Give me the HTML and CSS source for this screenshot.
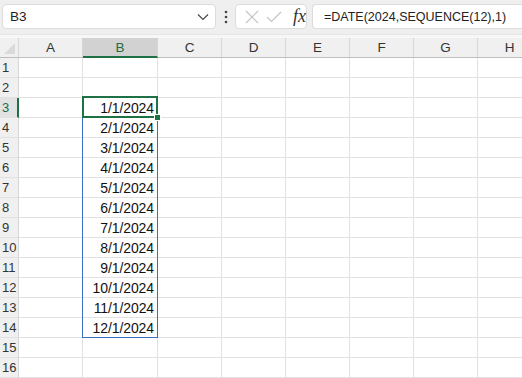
FILE: index.html
```html
<!DOCTYPE html>
<html lang="en">
<head>
    <meta charset="UTF-8">
    <title>Excel - SEQUENCE dates</title>
    <link rel="stylesheet" href="styles.css">
</head>
<body>
    <div class="toolbar">
        <div class="namebox">
            <span>B3</span>
            <svg class="chevron" width="12" height="8" viewBox="0 0 12 8"><path d="M1 1.5 L6 6.5 L11 1.5" fill="none" stroke="#444" stroke-width="1.1"/></svg>
        </div>
        <svg class="dots" width="4" height="14" viewBox="0 0 4 14"><circle cx="2" cy="2" r="1.3" fill="#444"/><circle cx="2" cy="7" r="1.3" fill="#444"/><circle cx="2" cy="12" r="1.3" fill="#444"/></svg>
        <div class="fbuttons">
            <svg width="14" height="14" viewBox="0 0 14 14"><path d="M1 1 L13 13 M13 1 L1 13" stroke="#c4c4c4" stroke-width="1.2"/></svg>
            <svg width="16" height="12" viewBox="0 0 16 12"><path d="M1 6 L5.5 10.5 L15 1" fill="none" stroke="#c4c4c4" stroke-width="1.2"/></svg>
            <span class="fx">fx</span>
        </div>
        <div class="formula">=DATE(2024,SEQUENCE(12),1)</div>
    </div>
    <div class="band"></div>

    <div class="sheet" id="sheet">
        <div class="corner"><span class="tri"></span></div>
    </div>

    <script>
        const sheet = document.getElementById('sheet');
        const cols = ['A', 'B', 'C', 'D', 'E', 'F', 'G', 'H'];

        cols.forEach(c => {
            const h = document.createElement('div');
            h.className = 'colhead' + (c === 'B' ? ' active' : '');
            h.textContent = c;
            sheet.appendChild(h);
        });

        for (let r = 1; r <= 16; r++) {
            const rh = document.createElement('div');
            rh.className = 'rowhead' + (r === 3 ? ' active' : '');
            rh.textContent = r;
            sheet.appendChild(rh);
            cols.forEach(c => {
                const cell = document.createElement('div');
                cell.className = 'cell';
                if (c === 'B' && r >= 3 && r <= 14) {
                    cell.textContent = (r - 2) + '/1/2024';
                }
                sheet.appendChild(cell);
            });
        }

        // spill range + selection drawn over the grid
        ['spill', 'select', 'handle'].forEach(n => {
            const d = document.createElement('div');
            d.className = n;
            sheet.appendChild(d);
        });
    </script>
</body>
</html>
```

FILE: styles.css
```css
body {
    margin: 0;
    width: 522px;
    height: 378px;
    overflow: hidden;
    background: #fff;
    font-family: "Liberation Sans", Arial, sans-serif;
}
.toolbar {
    display: flex;
    align-items: center;
    height: 34px;
    padding: 0 0 0 2px;
    background: #efefef;
    box-sizing: border-box;
}
.namebox {
    display: flex;
    align-items: center;
    justify-content: space-between;
    width: 214px;
    height: 25px;
    margin-top: -1px;
    padding: 0 6px 0 7px;
    box-sizing: border-box;
    background: #fff;
    border: 1px solid #dcdcdc;
    border-radius: 4px;
    font-size: 13.5px;
    color: #222;
}
.dots {
    margin: 0 7px 0 8px;
}
.fbuttons {
    display: flex;
    align-items: center;
    gap: 7px;
    width: 72px;
    height: 25px;
    margin-top: -1px;
    padding: 0 0 0 9px;
    box-sizing: border-box;
    background: #fff;
    border: 1px solid #dcdcdc;
    border-radius: 4px;
}
.fx {
    margin-left: 4px;
    font-family: "Liberation Serif", serif;
    font-style: italic;
    font-size: 18px;
    color: #333;
}
.formula {
    flex: 1;
    height: 25px;
    margin: -1px 0 0 5px;
    padding: 0 0 0 11px;
    line-height: 24px;
    box-sizing: border-box;
    background: #fff;
    border: 1px solid #dcdcdc;
    border-right: none;
    border-radius: 4px 0 0 4px;
    font-size: 12.5px;
    color: #222;
    white-space: nowrap;
}
.band {
    height: 4px;
    background: #f7f7f7;
    border-top: 1px solid #e6e6e6;
    box-sizing: border-box;
}
.sheet {
    position: relative;
    display: grid;
    grid-template-columns: 19px 64px 75px 64px 64px 64px 64px 64px 64px;
    grid-auto-rows: 20px;
}
.corner {
    position: relative;
    background: #f0f0f0;
    border-right: 1px solid #d6d6d6;
    border-bottom: 1px solid #bdbdbd;
}
.tri {
    position: absolute;
    right: 3px;
    bottom: 3px;
    width: 0;
    height: 0;
    border-left: 11px solid transparent;
    border-bottom: 11px solid #dadada;
}
.colhead {
    display: flex;
    align-items: center;
    justify-content: center;
    background: #f0f0f0;
    border-right: 1px solid #d6d6d6;
    border-bottom: 1px solid #bdbdbd;
    font-size: 13.5px;
    color: #333;
}
.colhead.active {
    background: #d2d2d2;
    color: #1e6b41;
    border-bottom: 2px solid #1e7145;
}
.rowhead {
    display: flex;
    align-items: center;
    padding-left: 2px;
    background: #f0f0f0;
    border-right: 1px solid #d6d6d6;
    border-bottom: 1px solid #e1e1e1;
    font-size: 13px;
    color: #333;
}
.rowhead.active {
    background: #e2e2e2;
    color: #1e6b41;
    border-right: 2px solid #1e7145;
}
.cell {
    display: flex;
    align-items: center;
    justify-content: flex-end;
    padding-right: 3px;
    border-right: 1px solid #e1e1e1;
    border-bottom: 1px solid #e1e1e1;
    font-size: 14px;
    letter-spacing: -0.1px;
    color: #111;
}
.spill {
    position: absolute;
    left: 82px;
    top: 59px;
    width: 76px;
    height: 241px;
    border: 1px solid #3b6dc2;
    box-sizing: border-box;
}
.select {
    position: absolute;
    left: 82px;
    top: 58px;
    width: 76px;
    height: 22px;
    border: 2px solid #1e7145;
    box-sizing: border-box;
}
.handle {
    position: absolute;
    left: 154px;
    top: 76px;
    width: 5px;
    height: 5px;
    background: #1e7145;
    border: 1px solid #fff;
}
```
